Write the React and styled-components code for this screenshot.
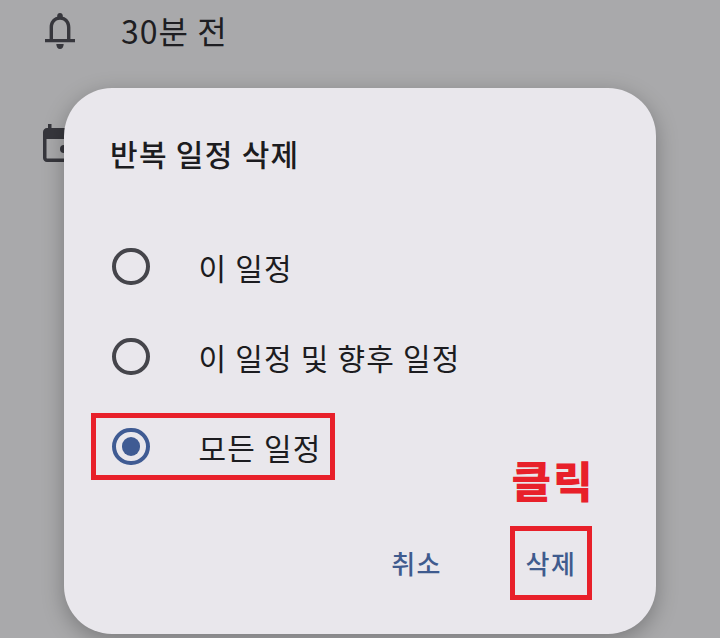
import React from 'react'
import styled, { createGlobalStyle } from 'styled-components'

const options = [
  { label: '이 일정' },
  { label: '이 일정 및 향후 일정' },
  { label: '모든 일정', checked: true, marked: true },
]

const App = () => (
  <Screen>
    <GlobalStyle />
    <EventDetails>
      <DetailRow>
        <BellIcon />
        <DetailText>30분 전</DetailText>
      </DetailRow>
      <DetailRow>
        <CalendarIcon />
      </DetailRow>
    </EventDetails>
    <Dialog>
      <Title>반복 일정 삭제</Title>
      <OptionList>
        {options.map(option => (
          <Option key={option.label} marked={option.marked}>
            <Radio checked={option.checked} />
            <OptionLabel>{option.label}</OptionLabel>
          </Option>
        ))}
      </OptionList>
      <Actions>
        <TextButton>취소</TextButton>
        <DeleteColumn>
          <ClickNote>클릭</ClickNote>
          <DeleteButton>삭제</DeleteButton>
        </DeleteColumn>
      </Actions>
    </Dialog>
  </Screen>
)

export default App

const BellIcon = () => (
  <IconSvg viewBox="0 0 30 36" width="30" height="36">
    <path
      d="M15 0c-1.700 0-2.800 1.200-2.800 2.800v1C7.300 5.100 4.600 9.300 4.600 14.500V26H0v3.200h30V26h-4.600V14.500c0-5.200-2.700-9.400-7.600-10.700v-1C17.800 1.200 16.700 0 15 0zM8 26V14.500C8 10.100 10.700 6.800 15 6.800s7 3.300 7 7.700V26z"
      fill="#37373d"
      fillRule="evenodd"
    />
    <path d="M11.300 31h7.400c0 3-1.600 5-3.700 5s-3.700-2-3.700-5z" fill="#37373d" />
  </IconSvg>
)

const CalendarIcon = () => (
  <IconSvg viewBox="0 0 36 38" width="36" height="38">
    <path
      d="M5 0h3.500v4h19V0H31v4h1c2.200 0 4 1.800 4 4v26c0 2.200-1.800 4-4 4H4c-2.200 0-4-1.800-4-4V8c0-2.200 1.800-4 4-4h1zM3.500 15v19c0 .3.200.5.500.5h28c.3 0 .5-.2.500-.5V15z"
      fill="#37373d"
      fillRule="evenodd"
    />
    <circle cx="21" cy="25" r="4" fill="#37373d" />
  </IconSvg>
)

const GlobalStyle = createGlobalStyle`
  html, body {
    margin: 0;
    padding: 0;
  }
  body {
    font-family: "Noto Sans CJK KR", "Noto Sans", sans-serif;
  }
`

const Screen = styled.div`
  position: relative;
  width: 720px;
  height: 638px;
  overflow: hidden;
  background: #a9a9ab;
`

const EventDetails = styled.div`
  display: flex;
  flex-direction: column;
  gap: 73px;
  padding: 13px 0 0 43px;
`

const DetailRow = styled.div`
  display: flex;
  align-items: flex-start;
  gap: 46px;
  padding-left: 2px;
  height: 38px;

  & + & {
    padding-left: 0;
  }
`

const IconSvg = styled.svg`
  display: block;
  flex: none;
`

const DetailText = styled.span`
  margin-top: -2px;
  font-size: 32px;
  line-height: 38px;
  letter-spacing: 1px;
  color: #1e1e22;
`

const Dialog = styled.div`
  position: absolute;
  left: 64px;
  top: 88px;
  width: 592px;
  height: 546px;
  box-sizing: border-box;
  padding: 43px 0 35px 46px;
  display: flex;
  flex-direction: column;
  border-radius: 48px;
  background: #e9e7ec;
  box-shadow: 0 6px 22px rgba(0, 0, 0, 0.28);
`

const Title = styled.h2`
  margin: 0;
  font-size: 30px;
  font-weight: 500;
  line-height: 44px;
  letter-spacing: 1.3px;
  color: #1c1c20;
`

const OptionList = styled.div`
  display: flex;
  flex-direction: column;
  gap: 23px;
  margin-top: 58px;
  align-items: flex-start;
`

const Option = styled.div.withConfig({ shouldForwardProp: prop => prop !== 'marked' })`
  display: flex;
  align-items: center;
  gap: 49px;
  height: 67px;
  box-sizing: border-box;
  margin-left: -19px;
  padding: 0 8.5px 0 16px;
  border: 5px solid ${props => (props.marked ? '#e8202a' : 'transparent')};
`

const Radio = styled.span`
  position: relative;
  flex: none;
  width: 37.5px;
  height: 37.5px;
  box-sizing: border-box;
  border-radius: 50%;
  border: 4px solid ${props => (props.checked ? '#3f5b93' : '#45454b')};

  &::after {
    content: '';
    display: ${props => (props.checked ? 'block' : 'none')};
    position: absolute;
    inset: 5.5px;
    border-radius: 50%;
    background: #3f5b93;
  }
`

const OptionLabel = styled.span`
  font-size: 30px;
  line-height: 40px;
  letter-spacing: 1.2px;
  color: #1c1c20;
`

const Actions = styled.div`
  display: flex;
  align-items: flex-end;
  justify-content: flex-end;
  gap: 68px;
  margin-top: -23px;
  padding-right: 64px;
`

const TextButton = styled.span`
  font-size: 26px;
  font-weight: 500;
  line-height: 36px;
  letter-spacing: 1.5px;
  color: #3f5b8e;
  margin-bottom: 19px;
`

const DeleteColumn = styled.div`
  display: flex;
  flex-direction: column;
  align-items: center;
  gap: 25px;
  width: 82px;
`

const ClickNote = styled.span`
  margin-left: 4px;
  font-size: 43px;
  font-weight: 900;
  line-height: 44px;
  letter-spacing: 2px;
  white-space: nowrap;
  color: #e8202a;
`

const DeleteButton = styled(TextButton)`
  box-sizing: border-box;
  display: flex;
  align-items: center;
  justify-content: center;
  width: 82px;
  height: 74px;
  margin-bottom: 0;
  border: 5px solid #e8202a;
`
